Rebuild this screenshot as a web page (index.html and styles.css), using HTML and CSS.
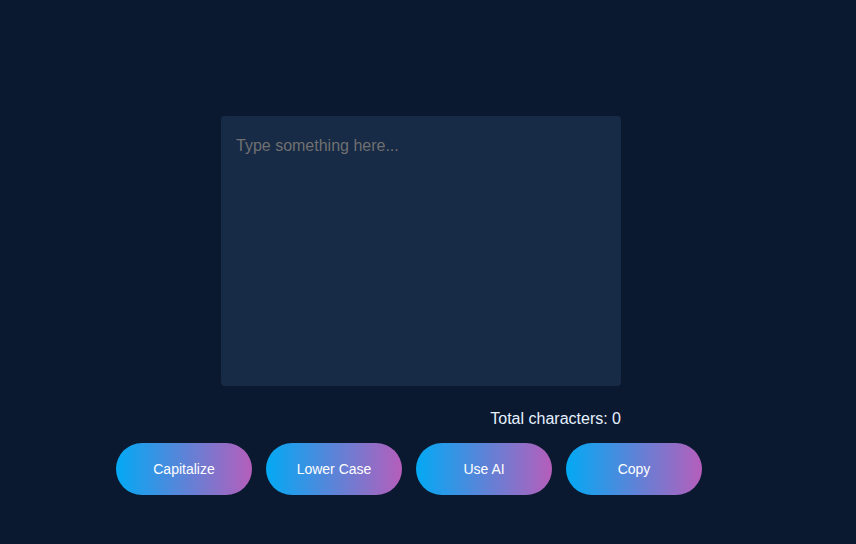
FILE: index.html
```html
<!DOCTYPE html>
<html>
<head>
<meta charset="utf-8">
<link rel="stylesheet" href="styles.css">
</head>
<body>
<main class="app">
  <textarea class="editor" placeholder="Type something here..."></textarea>
  <div class="count">Total characters: 0</div>
  <div class="actions">
    <button class="btn">Capitalize</button>
    <button class="btn">Lower Case</button>
    <button class="btn">Use AI</button>
    <button class="btn">Copy</button>
  </div>
</main>
</body>
</html>
```
FILE: styles.css
```css
html, body {
  margin: 0;
  padding: 0;
  background: #0a192f;
  font-family: "Liberation Sans", Arial, sans-serif;
}
.app {
  display: flex;
  flex-direction: column;
  align-items: flex-start;
  padding: 116px 0 0 116px;
}
.editor {
  box-sizing: border-box;
  width: 400px;
  height: 270px;
  margin-left: 105px;
  padding: 21px 15px;
  background: #172a46;
  border: none;
  border-radius: 4px;
  color: #e6f1ff;
  font-family: "Liberation Sans", Arial, sans-serif;
  font-size: 16px;
  resize: none;
  outline: none;
}
.editor::placeholder {
  color: #707070;
}
.count {
  box-sizing: border-box;
  width: 400px;
  margin-left: 105px;
  margin-top: 24px;
  text-align: right;
  color: #e6f1ff;
  font-size: 16px;
  line-height: 18px;
}
.actions {
  display: flex;
  gap: 14px;
  margin-top: 15px;
}
.btn {
  width: 136px;
  height: 52px;
  border: none;
  border-radius: 26px;
  background: linear-gradient(90deg, #03a9f4, #b55ebb);
  color: #ffffff;
  font-family: "Liberation Sans", Arial, sans-serif;
  font-size: 14px;
  cursor: pointer;
}
```
